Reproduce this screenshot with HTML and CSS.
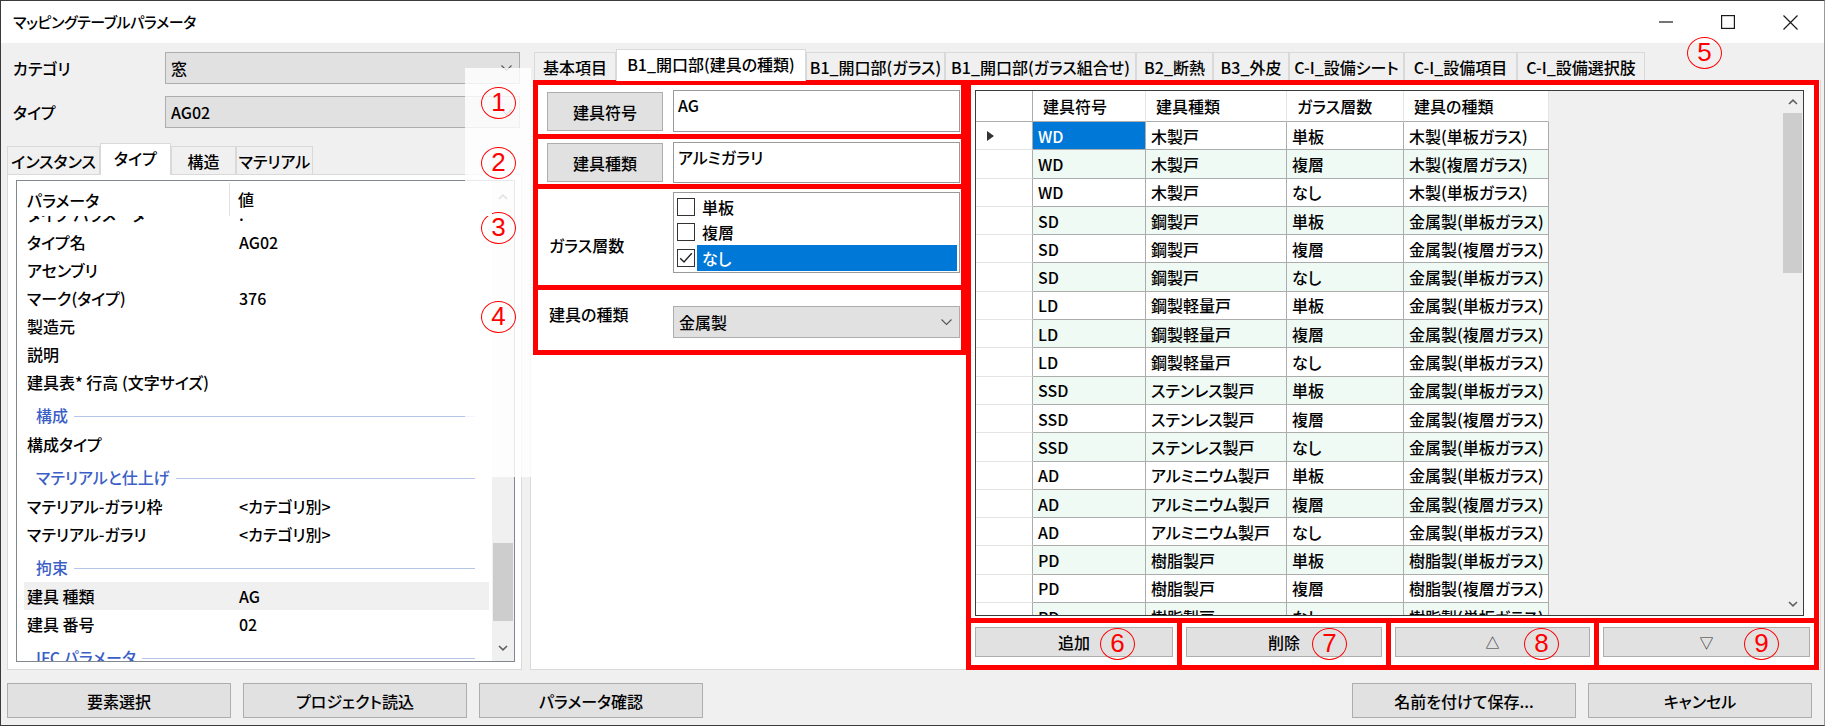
FILE: index.html
```html
<!DOCTYPE html>
<html lang="ja">
<head>
<meta charset="utf-8">
<title>マッピングテーブルパラメータ</title>
<link rel="stylesheet" href="styles.css">
</head>
<body>
<div class="window">
  <div class="titlebar">
    <span class="title">マッピングテーブルパラメータ</span>
    <div class="controls">
      <span class="ctl"><svg width="14" height="2" viewBox="0 0 14 2"><path d="M0 1H14" stroke="#1a1a1a" stroke-width="1.2"/></svg></span>
      <span class="ctl"><svg width="14" height="14" viewBox="0 0 14 14"><rect x="0.6" y="0.6" width="12.8" height="12.8" fill="none" stroke="#1a1a1a" stroke-width="1.2"/></svg></span>
      <span class="ctl"><svg width="15" height="15" viewBox="0 0 15 15"><path d="M0.5 0.5L14.5 14.5M14.5 0.5L0.5 14.5" stroke="#1a1a1a" stroke-width="1.2"/></svg></span>
    </div>
  </div>

  <div class="content">
    <section class="left">
      <div class="field">
        <span class="flabel">カテゴリ</span>
        <div class="combo"><span class="ctext">窓</span><svg class="chev" width="11" height="6" viewBox="0 0 11 6"><path d="M0.5 0.5L5.5 5.5L10.5 0.5" fill="none" stroke="#555" stroke-width="1.1"/></svg></div>
      </div>
      <div class="field">
        <span class="flabel">タイプ</span>
        <div class="combo"><span class="ctext">AG02</span><svg class="chev" width="11" height="6" viewBox="0 0 11 6"><path d="M0.5 0.5L5.5 5.5L10.5 0.5" fill="none" stroke="#555" stroke-width="1.1"/></svg></div>
      </div>

      <div class="ltabs">
        <span class="tab lt1">インスタンス</span>
        <span class="tab lt2 active">タイプ</span>
        <span class="tab lt3">構造</span>
        <span class="tab lt4">マテリアル</span>
      </div>

      <div class="lpanel">
        <div class="plist">
          <div class="pmain">
            <div class="phead">
              <span class="h1">パラメータ</span>
              <span class="h2">値</span>
            </div>
            <div class="pbody">
              <div class="prow cut"><span class="k">タイプ パラメータ</span><span class="v">.</span></div>
              <div class="prow"><span class="k">タイプ名</span><span class="v">AG02</span></div>
              <div class="prow"><span class="k">アセンブリ</span><span class="v"></span></div>
              <div class="prow"><span class="k">マーク(タイプ)</span><span class="v">376</span></div>
              <div class="prow"><span class="k">製造元</span><span class="v"></span></div>
              <div class="prow"><span class="k">説明</span><span class="v"></span></div>
              <div class="prow"><span class="k">建具表* 行高 (文字サイズ)</span><span class="v"></span></div>
              <div class="group"><span class="gl">構成</span><span class="gline"></span></div>
              <div class="prow"><span class="k">構成タイプ</span><span class="v"></span></div>
              <div class="group"><span class="gl">マテリアルと仕上げ</span><span class="gline"></span></div>
              <div class="prow"><span class="k">マテリアル-ガラリ枠</span><span class="v">&lt;カテゴリ別&gt;</span></div>
              <div class="prow"><span class="k">マテリアル-ガラリ</span><span class="v">&lt;カテゴリ別&gt;</span></div>
              <div class="group"><span class="gl">拘束</span><span class="gline"></span></div>
              <div class="prow sel"><span class="k">建具 種類</span><span class="v">AG</span></div>
              <div class="prow"><span class="k">建具 番号</span><span class="v">02</span></div>
              <div class="group"><span class="gl">IFC パラメータ</span><span class="gline"></span></div>
            </div>
          </div>
          <div class="vscroll">
            <div class="sup"><svg width="10" height="6" viewBox="0 0 10 6"><path d="M1 5L5 1.2L9 5" fill="none" stroke="#606060" stroke-width="1.6"/></svg></div>
            <div class="strack"><div class="sthumb lthumb"></div></div>
            <div class="sdown"><svg width="10" height="6" viewBox="0 0 10 6"><path d="M1 1L5 4.8L9 1" fill="none" stroke="#606060" stroke-width="1.6"/></svg></div>
          </div>
        </div>
      </div>
    </section>

    <section class="center">
      <div class="ctabs">
        <span class="tab ct1">基本項目</span>
        <span class="tab ct2 active">B1_開口部(建具の種類)</span>
        <span class="tab ct3">B1_開口部(ガラス)</span>
        <span class="tab ct4">B1_開口部(ガラス組合せ)</span>
        <span class="tab ct5">B2_断熱</span>
        <span class="tab ct6">B3_外皮</span>
        <span class="tab ct7">C-I_設備シート</span>
        <span class="tab ct8">C-I_設備項目</span>
        <span class="tab ct9">C-I_設備選択肢</span>
      </div>
      <div class="page">
        <div class="mid">
          <div class="box b1">
            <span class="btn lbtn">建具符号</span>
            <div class="tbox tb1">AG</div>
          </div>
          <div class="box b2">
            <span class="btn lbtn">建具種類</span>
            <div class="tbox tb2">アルミガラリ</div>
          </div>
          <div class="box b3">
            <span class="blabel">ガラス層数</span>
            <div class="chklist">
              <div class="chk"><span class="cb"></span><span class="ct">単板</span></div>
              <div class="chk"><span class="cb"></span><span class="ct">複層</span></div>
              <div class="chk"><span class="cb"><svg width="14" height="12" viewBox="0 0 14 12"><path d="M1.2 6.2L5 10L12.8 1.2" fill="none" stroke="#222" stroke-width="1.4"/></svg></span><span class="ct on">なし</span></div>
            </div>
          </div>
          <div class="box b4">
            <span class="blabel">建具の種類</span>
            <div class="combo mcombo"><span class="ctext">金属製</span><svg class="chev" width="11" height="6" viewBox="0 0 11 6"><path d="M0.5 0.5L5.5 5.5L10.5 0.5" fill="none" stroke="#555" stroke-width="1.1"/></svg></div>
          </div>
        </div>

        <div class="right">
          <div class="gridwrap">
            <div class="dgv">
              <div class="dgv-area">
                <div class="dgv-table">
                  <div class="r head"><span class="rh"></span><span class="c">建具符号</span><span class="c">建具種類</span><span class="c">ガラス層数</span><span class="c">建具の種類</span></div>
                  <div class="r"><span class="rh cur"><svg width="7" height="10" viewBox="0 0 7 10"><path d="M0 0L7 5L0 10Z" fill="#333"/></svg></span><span class="c selc">WD</span><span class="c">木製戸</span><span class="c">単板</span><span class="c">木製(単板ガラス)</span></div>
                  <div class="r alt"><span class="rh"></span><span class="c">WD</span><span class="c">木製戸</span><span class="c">複層</span><span class="c">木製(複層ガラス)</span></div>
                  <div class="r"><span class="rh"></span><span class="c">WD</span><span class="c">木製戸</span><span class="c">なし</span><span class="c">木製(単板ガラス)</span></div>
                  <div class="r alt"><span class="rh"></span><span class="c">SD</span><span class="c">鋼製戸</span><span class="c">単板</span><span class="c">金属製(単板ガラス)</span></div>
                  <div class="r"><span class="rh"></span><span class="c">SD</span><span class="c">鋼製戸</span><span class="c">複層</span><span class="c">金属製(複層ガラス)</span></div>
                  <div class="r alt"><span class="rh"></span><span class="c">SD</span><span class="c">鋼製戸</span><span class="c">なし</span><span class="c">金属製(単板ガラス)</span></div>
                  <div class="r"><span class="rh"></span><span class="c">LD</span><span class="c">鋼製軽量戸</span><span class="c">単板</span><span class="c">金属製(単板ガラス)</span></div>
                  <div class="r alt"><span class="rh"></span><span class="c">LD</span><span class="c">鋼製軽量戸</span><span class="c">複層</span><span class="c">金属製(複層ガラス)</span></div>
                  <div class="r"><span class="rh"></span><span class="c">LD</span><span class="c">鋼製軽量戸</span><span class="c">なし</span><span class="c">金属製(単板ガラス)</span></div>
                  <div class="r alt"><span class="rh"></span><span class="c">SSD</span><span class="c">ステンレス製戸</span><span class="c">単板</span><span class="c">金属製(単板ガラス)</span></div>
                  <div class="r"><span class="rh"></span><span class="c">SSD</span><span class="c">ステンレス製戸</span><span class="c">複層</span><span class="c">金属製(複層ガラス)</span></div>
                  <div class="r alt"><span class="rh"></span><span class="c">SSD</span><span class="c">ステンレス製戸</span><span class="c">なし</span><span class="c">金属製(単板ガラス)</span></div>
                  <div class="r"><span class="rh"></span><span class="c">AD</span><span class="c">アルミニウム製戸</span><span class="c">単板</span><span class="c">金属製(単板ガラス)</span></div>
                  <div class="r alt"><span class="rh"></span><span class="c">AD</span><span class="c">アルミニウム製戸</span><span class="c">複層</span><span class="c">金属製(複層ガラス)</span></div>
                  <div class="r"><span class="rh"></span><span class="c">AD</span><span class="c">アルミニウム製戸</span><span class="c">なし</span><span class="c">金属製(単板ガラス)</span></div>
                  <div class="r alt"><span class="rh"></span><span class="c">PD</span><span class="c">樹脂製戸</span><span class="c">単板</span><span class="c">樹脂製(単板ガラス)</span></div>
                  <div class="r"><span class="rh"></span><span class="c">PD</span><span class="c">樹脂製戸</span><span class="c">複層</span><span class="c">樹脂製(複層ガラス)</span></div>
                  <div class="r alt"><span class="rh"></span><span class="c">PD</span><span class="c">樹脂製戸</span><span class="c">なし</span><span class="c">樹脂製(単板ガラス)</span></div>
                </div>
              </div>
              <div class="vscroll gscroll">
                <div class="gsup"><svg width="10" height="6" viewBox="0 0 10 6"><path d="M1 5L5 1.2L9 5" fill="none" stroke="#606060" stroke-width="1.6"/></svg></div>
                <div class="strack"><div class="sthumb gthumb"></div></div>
                <div class="gsdown"><svg width="10" height="6" viewBox="0 0 10 6"><path d="M1 1L5 4.8L9 1" fill="none" stroke="#606060" stroke-width="1.6"/></svg></div>
              </div>
            </div>
          </div>
          <div class="btnrow">
            <div class="bcell"><span class="btn">追加</span></div>
            <div class="bcell"><span class="btn">削除</span></div>
            <div class="bcell"><span class="btn sym">△</span></div>
            <div class="bcell"><span class="btn sym">▽</span></div>
          </div>
        </div>
      </div>
    </section>
  </div>

  <div class="footer">
    <span class="btn fbtn">要素選択</span>
    <span class="btn fbtn">プロジェクト読込</span>
    <span class="btn fbtn">パラメータ確認</span>
    <span class="btn fbtn push">名前を付けて保存...</span>
    <span class="btn fbtn">キャンセル</span>
  </div>

  <div class="overlay"></div>
  <span class="num n1">1</span>
  <span class="num n2">2</span>
  <span class="num n3">3</span>
  <span class="num n4">4</span>
  <span class="num n5">5</span>
  <span class="num n6">6</span>
  <span class="num n7">7</span>
  <span class="num n8">8</span>
  <span class="num n9">9</span>
</div>
</body>
</html>
```

FILE: styles.css
```css
* { box-sizing: border-box; }
html, body { margin: 0; padding: 0; }
body {
  width: 1825px;
  height: 726px;
  overflow: hidden;
  background: #f0f0f0;
  font-family: "Noto Sans CJK JP", "Noto Sans", sans-serif;
  font-feature-settings: "palt" 1;
  font-size: 16px;
  font-weight: 500;
  color: #000;
}

.window {
  position: relative;
  width: 1825px;
  height: 726px;
  border: 1px solid #3a3a3a;
  border-right-color: #9a9a9a;
  display: flex;
  flex-direction: column;
  background: #f0f0f0;
}

/* title bar */
.titlebar {
  flex: none;
  height: 42px;
  background: #fff;
  display: flex;
  align-items: center;
  padding-left: 12px;
}
.title { font-size: 15px; line-height: 20px; letter-spacing: -0.4px; }
.controls { margin-left: auto; margin-right: 3px; display: flex; }
.ctl { width: 62px; height: 42px; display: flex; align-items: center; justify-content: center; }

/* main area */
.content { flex: none; height: 636px; display: flex; }

.left {
  width: 515px;
  margin-left: 6px;
  padding-top: 9px;
  display: flex;
  flex-direction: column;
}
.field { display: flex; align-items: center; height: 32px; }
.field + .field { margin-top: 12px; }
.flabel { width: 158px; padding-left: 6px; line-height: 22px; }

.combo {
  height: 32px;
  background: #e1e1e1;
  border: 1px solid #adadad;
  display: flex;
  align-items: center;
  padding-left: 5px;
  padding-right: 7px;
}
.left .combo { width: 355px; }
.ctext { flex: 1; line-height: 22px; }
.chev { flex: none; }

/* tabs */
.tab {
  display: flex;
  align-items: center;
  justify-content: center;
  height: 28px;
  background: #f0f0f0;
  border: 1px solid #d9d9d9;
  border-bottom: none;
  white-space: nowrap;
  line-height: 20px;
}
.tab.active {
  height: 32px;
  background: #fff;
  margin-bottom: -1px;
  position: relative;
  z-index: 1;
  padding-bottom: 3px;
}
.ltabs { margin-top: 15px; height: 31px; display: flex; align-items: flex-end; }
.lt1 { width: 93px; }
.lt2 { width: 71px; }
.lt3 { width: 65px; }
.lt4 { width: 77px; }

.lpanel {
  height: 496px;
  background: #fff;
  border: 1px solid #d9d9d9;
  padding: 5px 6px 7px 8px;
}
.plist { height: 100%; border: 1px solid #828790; display: flex; }
.pmain { flex: 1; display: flex; flex-direction: column; overflow: hidden; }
.phead { flex: none; height: 35px; display: flex; align-items: stretch; position: relative; z-index: 1; background: #fff; }
.phead .h1 {
  width: 213px;
  padding-left: 10px;
  margin-top: 2px;
  border-right: 1px solid #e3e3e3;
  display: flex;
  align-items: center;
}
.phead .h2 { padding-left: 8px; display: flex; align-items: center; }
.pbody { flex: 1; overflow: hidden; }
.prow {
  height: 28px;
  margin: 0 3px 0 7px;
  display: flex;
  align-items: center;
  line-height: 22px;
  white-space: nowrap;
}
.prow.cut { margin-top: -16px; }
.prow.sel { background: #f0f0f0; }
.prow .k { width: 215px; padding-left: 3px; }
.group {
  height: 34px;
  padding-top: 4px;
  margin: 0 3px 0 7px;
  display: flex;
  align-items: center;
  color: #3b5fc6;
  line-height: 22px;
}
.group .gl { padding-left: 12px; white-space: nowrap; }
.gline { flex: 1; height: 1px; background: #b7c5e8; margin: 2px 14px 0 6px; }

/* scrollbars */
.vscroll { flex: none; width: 22px; background: #f0f0f0; display: flex; flex-direction: column; }
.sup { height: 32px; display: flex; align-items: center; justify-content: center; }
.sdown { height: 26px; display: flex; align-items: center; justify-content: center; }
.strack { flex: 1; }
.sthumb { background: #cdcdcd; margin: 0 1px; }
.lthumb { margin-top: 330px; height: 78px; }

/* center tab control */
.center { width: 1291px; margin-left: 8px; display: flex; flex-direction: column; }
.ctabs { flex: none; height: 37px; padding-left: 4px; display: flex; align-items: flex-end; }
.ct1 { width: 82px; }
.ct2 { width: 190px; }
.ct3 { width: 139px; }
.ct4 { width: 191px; }
.ct5 { width: 77px; }
.ct6 { width: 76px; }
.ct7 { width: 115px; }
.ct8 { width: 113px; }
.ct9 { width: 128px; }

.page {
  height: 590px;
  background: #fff;
  border-left: 1px solid #d9d9d9;
  border-right: 1px solid #d9d9d9;
  border-bottom: 1px solid #d9d9d9;
  padding-left: 2px;
  display: flex;
  align-items: flex-start;
}

/* middle column (red frames) */
.mid {
  width: 433px;
  background: #ff0000;
  padding: 5px;
  display: flex;
  flex-direction: column;
  gap: 5px;
}
.box { background: #fff; display: flex; align-items: flex-start; }
.b1 { height: 49px; padding: 5px 0 0 9px; }
.b2 { height: 45px; padding: 3px 0 0 9px; }
.b3 { height: 96px; }
.b4 { height: 60px; }

.btn {
  display: flex;
  align-items: center;
  justify-content: center;
  background: #e1e1e1;
  border: 1px solid #adadad;
  line-height: 20px;
  white-space: nowrap;
}
.lbtn { width: 116px; height: 39px; }
.b1 .lbtn { margin-top: 2px; }
.b2 .lbtn { margin-top: 1px; }

.tbox {
  width: 287px;
  margin-left: 10px;
  background: #fff;
  border: 1px solid #9a9a9a;
  padding: 3px 4px;
  line-height: 22px;
}
.tb1 { height: 42px; }
.tb2 { height: 41px; }

.blabel { width: 135px; padding-left: 11px; line-height: 24px; flex: none; }
.b3 .blabel { margin-top: 44px; }
.b4 .blabel { margin-top: 12px; }

.chklist {
  margin-top: 3px;
  width: 287px;
  height: 81px;
  border: 1px solid #9a9a9a;
  padding-top: 1px;
}
.chk { height: 25.5px; display: flex; align-items: center; }
.cb {
  flex: none;
  width: 18px;
  height: 18px;
  margin-left: 3px;
  border: 1px solid #333;
  background: #fff;
  display: flex;
  align-items: center;
  justify-content: center;
}
.ct { margin-left: 2px; padding-left: 5px; line-height: 22px; flex: 1; margin-right: 2px; height: 100%; display: flex; align-items: center; }
.ct.on { background: #0078d7; color: #fff; }

.mcombo { width: 287px; margin-top: 16px; }

/* right column */
.right {
  width: 853px;
  background: #ff0000;
  padding: 5px;
  display: grid;
  grid-template-rows: 533px 42px;
  gap: 5px;
}
.gridwrap { background: #fff; padding: 5px 10px 2px 4px; }
.dgv { height: 100%; border: 1px solid #3c3c3c; display: flex; }
.dgv-area { flex: 1; background: #f0f0f0; overflow: hidden; }
.dgv-table {
  display: grid;
  grid-template-columns: 57px 113px 141px 117px 145px;
  grid-template-rows: 31px;
  grid-auto-rows: 28.3px;
  justify-content: start;
}
.r { display: contents; }
.r > span {
  display: flex;
  align-items: center;
  white-space: nowrap;
  overflow: hidden;
  line-height: 22px;
}
.r .c {
  background: #fff;
  border-right: 1px solid #acacac;
  border-bottom: 1px solid #acacac;
  padding-left: 5px;
}
.r.alt .c { background: #f0faf5; }
.r .rh {
  background: #fff;
  border-right: 1px solid #acacac;
  border-bottom: 1px solid #e4e4e4;
}
.rh.cur { padding-left: 11px; }
.r .c.selc { background: #0078d7; color: #fff; }
.r.head .c {
  background: #fff;
  border-right: 1px solid #e4e4e4;
  border-bottom: 1px solid #acacac;
  padding-left: 10px;
}
.r.head .rh { border-bottom: 1px solid #acacac; }

.gscroll { width: 21px; }
.gsup { height: 22px; display: flex; align-items: center; justify-content: center; }
.gsdown { height: 22px; display: flex; align-items: center; justify-content: center; }
.gthumb { height: 160px; margin-top: 0; }

.btnrow {
  display: grid;
  grid-template-columns: 206px 204px 203px 1fr;
  gap: 5px;
}
.bcell { background: #fff; padding: 4px 4px 8px 4px; }
.bcell .btn { height: 30px; }
.sym { font-size: 14px; color: #333; }

/* footer */
.footer {
  flex: none;
  height: 46px;
  padding: 4px 12px 0 6px;
  display: flex;
  align-items: flex-start;
  gap: 12px;
}
.fbtn { width: 224px; height: 35px; }
.push { margin-left: auto; }

/* annotations */
.overlay {
  position: absolute;
  left: 464px;
  top: 67px;
  width: 66px;
  height: 409px;
  background: rgba(255, 255, 255, 0.82);
}
.num {
  position: absolute;
  width: 35px;
  height: 32px;
  border: 1.5px solid #ff0000;
  border-radius: 50%;
  color: #ff0000;
  font-family: "Liberation Sans", "DejaVu Sans", sans-serif;
  font-weight: 400;
  font-size: 26px;
  line-height: 29px;
  text-align: center;
}
.n1 { left: 480px; top: 86px; }
.n2 { left: 480px; top: 146px; }
.n3 { left: 480px; top: 211px; }
.n4 { left: 480px; top: 300px; }
.n5 { left: 1686px; top: 36px; }
.n6 { left: 1099px; top: 627px; }
.n7 { left: 1311px; top: 627px; }
.n8 { left: 1523px; top: 627px; }
.n9 { left: 1743px; top: 627px; }
```
